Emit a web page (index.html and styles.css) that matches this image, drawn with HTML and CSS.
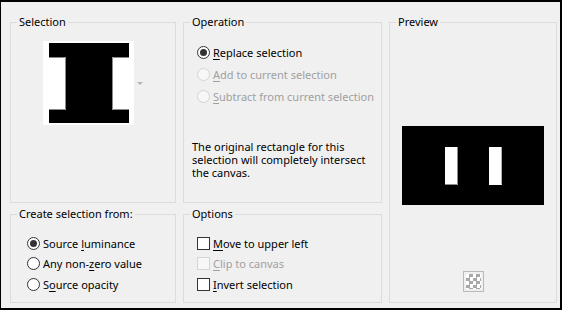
FILE: index.html
```html
<!DOCTYPE html>
<html>
<head>
    <title>Load Selection From Alpha</title>
    <link rel="stylesheet" href="styles.css">
</head>
<body>
    <div class="dialog">

        <fieldset class="group selection">
            <legend>Selection</legend>
            <div class="thumb">
                <svg width="91" height="84" viewBox="0 0 91 84">
                    <rect x="0" y="0" width="91" height="84" fill="#fff"/>
                    <rect x="6" y="2" width="80" height="80" fill="#000"/>
                    <rect x="6" y="16" width="17" height="53" fill="#fff"/>
                    <path d="M6 16.5 H22.5 V68.5 H6" fill="none" stroke="#8a8a8a" stroke-width="1"/>
                    <rect x="69" y="16" width="17" height="53" fill="#fff"/>
                    <path d="M86 16.5 H69.5 V68.5 H86" fill="none" stroke="#8a8a8a" stroke-width="1"/>
                </svg>
                <span class="drop"></span>
            </div>
        </fieldset>

        <fieldset class="group operation">
            <legend>Operation</legend>
            <div class="choices">
                <label class="opt"><span class="radio checked"></span><span><u>R</u>eplace selection</span></label>
                <label class="opt disabled"><span class="radio"></span><span><u>A</u>dd to current selection</span></label>
                <label class="opt disabled"><span class="radio"></span><span><u>S</u>ubtract from current selection</span></label>
            </div>
            <p class="note">The original rectangle for this selection will completely intersect the canvas.</p>
        </fieldset>

        <fieldset class="group preview">
            <legend>Preview</legend>
            <div class="preview-body">
                <svg width="142" height="79" viewBox="0 0 142 79">
                    <rect x="0" y="0" width="142" height="79" fill="#000"/>
                    <rect x="43" y="21" width="13" height="38" fill="#fff"/>
                    <path d="M55.5 21 V58.5 H43" fill="none" stroke="#8a8a8a" stroke-width="1"/>
                    <rect x="87" y="21" width="13" height="38" fill="#fff"/>
                    <path d="M99.5 21 V58.5" fill="none" stroke="#b0b0b0" stroke-width="1"/>
                </svg>
                <span class="checker"></span>
            </div>
        </fieldset>

        <fieldset class="group source">
            <legend>Create selection from:</legend>
            <div class="choices small">
                <label class="opt"><span class="radio checked"></span><span>Source <u>l</u>uminance</span></label>
                <label class="opt"><span class="radio"></span><span>Any non-<u>z</u>ero value</span></label>
                <label class="opt"><span class="radio"></span><span>S<u>o</u>urce opacity</span></label>
            </div>
        </fieldset>

        <fieldset class="group options">
            <legend>Options</legend>
            <div class="choices small">
                <label class="opt"><span class="check"></span><span><u>M</u>ove to upper left</span></label>
                <label class="opt disabled"><span class="check"></span><span><u>C</u>lip to canvas</span></label>
                <label class="opt"><span class="check"></span><span><u>I</u>nvert selection</span></label>
            </div>
        </fieldset>

    </div>
</body>
</html>
```

FILE: styles.css
```css
body {
    margin: 0;
    padding: 0;
    background-color: #f0f0f0;
    font-family: "Noto Sans", "Open Sans", sans-serif;
    font-size: 11px;
    color: #000;
}
.dialog {
    width: 562px;
    height: 310px;
    box-sizing: border-box;
    border: 2px solid #000;
    border-left-width: 1px;
    padding: 12px 0 0 9px;
    background-color: #f0f0f0;
    display: grid;
    grid-template-columns: 166px 199px 168px;
    grid-template-rows: 189px 97px;
    column-gap: 7px;
    row-gap: 3px;
}
.group {
    margin: 0;
    padding: 0;
    min-width: 0;
    border: 1px solid #dcdcdc;
}
.group legend {
    margin-left: 6px;
    padding: 0 2px;
    line-height: 16px;
}
.selection { grid-column: 1; grid-row: 1; }
.operation { grid-column: 2; grid-row: 1; }
.preview { grid-column: 3; grid-row: 1 / 3; }
.source { grid-column: 1; grid-row: 2; }
.options { grid-column: 2; grid-row: 2; }

/* selection thumbnail */
.thumb {
    display: flex;
    align-items: center;
    padding: 11px 0 0 32px;
}
.thumb svg {
    display: block;
}
.drop {
    width: 0;
    height: 0;
    margin-left: 3px;
    border-left: 3px solid transparent;
    border-right: 3px solid transparent;
    border-top: 3px solid #b4b4b4;
}

/* radio and check lists */
.choices {
    display: flex;
    flex-direction: column;
    padding: 11px 0 0 13px;
}
.opt {
    display: flex;
    align-items: center;
    height: 22px;
    white-space: nowrap;
}
.choices.small .opt {
    height: 20.5px;
}
.source .choices {
    padding-left: 16px;
}
.opt u {
    text-decoration-thickness: 1px;
    text-underline-offset: 2px;
}
.radio, .check {
    flex: none;
    width: 13px;
    height: 13px;
    box-sizing: border-box;
    border: 1px solid #333;
    background-color: #fff;
    margin-right: 3px;
}
.radio {
    border-radius: 50%;
    display: flex;
    align-items: center;
    justify-content: center;
}
.radio.checked::after {
    content: "";
    width: 7px;
    height: 7px;
    border-radius: 50%;
    background-color: #333;
}
.opt.disabled {
    color: #a0a0a0;
}
.opt.disabled .radio,
.opt.disabled .check {
    border-color: #d4d4d4;
    background-color: #f7f7f7;
}
.note {
    margin: 33px 0 0 8px;
    line-height: 13px;
    width: 180px;
}

/* preview */
.preview-body {
    display: flex;
    flex-direction: column;
    align-items: center;
    padding-top: 96px;
}
.preview-body svg {
    display: block;
}
.checker {
    width: 21px;
    height: 21px;
    box-sizing: border-box;
    margin-top: 66px;
    border: 1px solid #b9b9b9;
    background-color: #fff;
    background-image: conic-gradient(#a8a8a8 25%, #fff 0 50%, #a8a8a8 0 75%, #fff 0);
    background-size: 7px 7px;
    background-position: 2px 2px;
    background-clip: content-box;
    padding: 2px;
}
```
